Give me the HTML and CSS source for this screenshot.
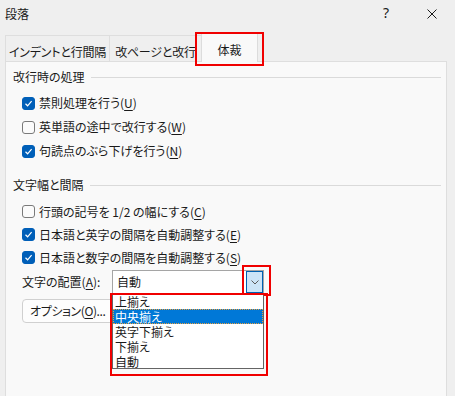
FILE: index.html
```html
<!DOCTYPE html>
<html lang="ja">

<head>
    <meta charset="UTF-8">
    <meta name="viewport" content="width=device-width, initial-scale=1.0">
    <title>段落</title>
    <link rel="stylesheet" href="styles.css">
</head>

<body>
    <div class="titlebar">
        <div class="title">段落</div>
        <div class="title-btns">
            <div class="title-btn help">?</div>
            <div class="title-btn">
                <svg width="10" height="10" viewBox="0 0 10 10">
                    <path d="M0.5 0.5 L9.5 9.5 M9.5 0.5 L0.5 9.5" stroke="#1a1a1a" stroke-width="1" fill="none" />
                </svg>
            </div>
        </div>
    </div>

    <div class="tabs">
        <div class="tab tab-indent">インデントと行間隔</div>
        <div class="tab tab-break">改ページと改行</div>
        <div class="tab tab-active">体裁
            <div class="mark mark-tab"></div>
        </div>
    </div>

    <div class="panel">
        <div class="group-head">
            <span>改行時の処理</span>
            <div class="group-line"></div>
        </div>
        <div class="checks">
            <div class="check-row"><span class="box checked"></span>禁則処理を行う(<u>U</u>)</div>
            <div class="check-row"><span class="box"></span>英単語の途中で改行する(<u>W</u>)</div>
            <div class="check-row"><span class="box checked"></span>句読点のぶら下げを行う(<u>N</u>)</div>
        </div>

        <div class="group-head group-second">
            <span>文字幅と間隔</span>
            <div class="group-line"></div>
        </div>
        <div class="checks checks-tight">
            <div class="check-row"><span class="box"></span>行頭の記号を 1/2 の幅にする(<u>C</u>)</div>
            <div class="check-row"><span class="box checked"></span>日本語と英字の間隔を自動調整する(<u>E</u>)</div>
            <div class="check-row"><span class="box checked"></span>日本語と数字の間隔を自動調整する(<u>S</u>)</div>
        </div>

        <div class="combo-row">
            <div class="combo-label">文字の配置(<u>A</u>):</div>
            <div class="combo">
                <div class="combo-value">自動</div>
                <div class="combo-btn">
                    <svg width="8" height="5" viewBox="0 0 8 5">
                        <polyline points="0.5,0.5 4,4 7.5,0.5" stroke="#5a5a5a" stroke-width="1" fill="none" />
                    </svg>
                    <div class="mark mark-btn"></div>
                </div>
                <div class="combo-list">
                    <div class="combo-item">上揃え</div>
                    <div class="combo-item selected">中央揃え</div>
                    <div class="combo-item">英字下揃え</div>
                    <div class="combo-item">下揃え</div>
                    <div class="combo-item">自動</div>
                    <div class="mark mark-list"></div>
                </div>
            </div>
        </div>

        <div class="option-btn">オプション(<u>O</u>)...</div>
    </div>
</body>

</html>
```

FILE: styles.css
```css
* {
    margin: 0;
    padding: 0;
    box-sizing: border-box;
}

body {
    width: 455px;
    height: 396px;
    overflow: hidden;
    background-color: #efefef;
    color: #1a1a1a;
    font-family: "Noto Sans CJK JP", "Noto Sans", sans-serif;
    font-size: 12px;
    line-height: 16px;
    font-feature-settings: "palt";
}

u {
    text-decoration-thickness: 1px;
    text-underline-offset: 2px;
}

/* タイトルバー */
.titlebar {
    height: 28px;
    display: flex;
    align-items: center;
    justify-content: space-between;
}

.titlebar .title {
    padding-left: 5px;
    padding-bottom: 1px;
    font-size: 12px;
}

.title-btns {
    display: flex;
    height: 100%;
}

.title-btn {
    width: 46px;
    height: 100%;
    display: flex;
    align-items: center;
    justify-content: center;
}

.title-btn.help {
    font-family: "Noto Sans", sans-serif;
    font-size: 14px;
    padding-bottom: 2px;
}

/* タブ */
.tabs {
    margin-top: 4px;
    margin-left: 5px;
    display: flex;
    align-items: flex-end;
    position: relative;
    z-index: 2;
}

.tab {
    height: 26px;
    display: flex;
    align-items: center;
    justify-content: center;
    border: 1px solid #dedede;
    border-bottom: none;
    background-color: #efefef;
    padding-top: 6px;
    letter-spacing: -0.2px;
}

.tab-indent {
    width: 105px;
}

.tab-break {
    width: 92px;
    border-left: none;
}

.tab-active {
    position: relative;
    width: 57px;
    height: 30px;
    margin-bottom: -1px;
    margin-left: -1px;
    background-color: #f9f9f9;
    border-color: #dcdcdc;
    padding-top: 5px;
    letter-spacing: 0;
}

/* 赤枠 */
.mark {
    position: absolute;
    border: 2px solid #f00000;
    pointer-events: none;
}

.mark-tab {
    left: -7px;
    top: -1px;
    width: 69px;
    height: 34px;
}

.mark-btn {
    left: -5px;
    top: -7px;
    width: 29px;
    height: 31px;
}

.mark-list {
    left: -3px;
    top: -1px;
    width: 158px;
    height: 83px;
}

/* パネル */
.panel {
    position: relative;
    z-index: 1;
    margin-left: 5px;
    width: 442px;
    height: 340px;
    background-color: #f9f9f9;
    border: 1px solid #dedede;
    padding: 7px 5px 0 7px;
}

.group-head {
    height: 16px;
    display: flex;
    align-items: center;
}

.group-second {
    margin-top: 14px;
}

.group-line {
    flex: 1;
    margin-left: 6px;
    border-top: 1px solid #dadada;
}

.checks {
    margin-top: 6px;
    padding-left: 9px;
}

.check-row {
    height: 24px;
    display: flex;
    align-items: center;
}

.checks-tight {
    margin-top: 7px;
}

.checks-tight .check-row {
    height: 23px;
}

.box {
    width: 13px;
    height: 13px;
    margin-right: 4px;
    border: 1px solid #7a7a7a;
    border-radius: 3px;
    background-color: #fbfbfb;
    flex-shrink: 0;
}

.box.checked {
    border-color: #005fb8;
    background-color: #005fb8;
    background-image: url("data:image/svg+xml,%3Csvg xmlns='http://www.w3.org/2000/svg' width='11' height='11' viewBox='0 0 11 11'%3E%3Cpolyline points='2.5,5.8 4.6,7.8 8.6,3.2' stroke='white' stroke-width='1.2' fill='none'/%3E%3C/svg%3E");
    background-repeat: no-repeat;
    background-position: center;
}

/* コンボボックス */
.combo-row {
    margin-top: 1px;
    padding-left: 9px;
    display: flex;
    align-items: center;
    height: 24px;
}

.combo-label {
    width: 90px;
}

.combo {
    position: relative;
    width: 152px;
    height: 24px;
    border: 1px solid #a5a5a5;
    background-color: #fff;
    display: flex;
    align-items: center;
}

.combo-value {
    flex: 1;
    padding-left: 4px;
}

.combo-btn {
    position: relative;
    width: 17px;
    height: 22px;
    background-color: #cce4f7;
    border: 1px solid #0060b0;
    display: flex;
    align-items: center;
    justify-content: center;
}

.combo-list {
    position: absolute;
    left: -1px;
    top: 100%;
    width: 152px;
    height: 76px;
    border: 1px solid #646464;
    background-color: #fff;
    z-index: 3;
}

.combo-item {
    height: 15px;
    line-height: 15px;
    padding-left: 2px;
}

.combo-item.selected {
    background-color: #0078d7;
    color: #fff;
    outline: 1px dotted #e8a040;
    outline-offset: -1px;
}

/* オプション */
.option-btn {
    margin-top: 5px;
    margin-left: 9px;
    width: 96px;
    height: 24px;
    border: 1px solid #d0d0d0;
    border-radius: 4px;
    background-color: #fdfdfd;
    padding-left: 7px;
    letter-spacing: -0.4px;
    display: flex;
    align-items: center;
}
```
